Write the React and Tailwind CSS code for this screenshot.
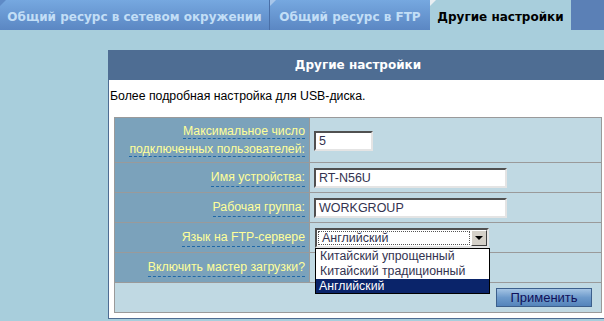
import React from "react";

const Label = ({ children }) => (
  <span className="border-b border-dashed border-[#1f68a8]">{children}</span>
);

const inset =
  "border-2 border-t-[#505050] border-l-[#505050] border-b-[#e4e4e4] border-r-[#e4e4e4] bg-white";

export default function App() {
  return (
    <div
      className="w-[604px] h-[321px] overflow-hidden bg-[#a8cedc] relative"
      style={{ fontFamily: '"Liberation Sans", Arial, sans-serif' }}
    >
      {/* Tabs */}
      <div className="flex h-[30px] bg-gradient-to-b from-[#6e9fd8] to-[#5a82bc]">
        <div className="relative w-[270px] h-full flex items-center justify-center pt-[3px] border-r border-[#4a70a8] bg-gradient-to-b from-[#76a8e0] to-[#5b87c3]">
          <div className="absolute left-0 top-0 w-0 h-0 border-t-[6px] border-t-[#5e8ac6] border-r-[6px] border-r-transparent" />
          <span
            className="text-[#c2def6] font-bold whitespace-nowrap"
            style={{ fontFamily: '"DejaVu Sans", Verdana, sans-serif', fontSize: "12px" }}
          >
            Общий ресурс в сетевом окружении
          </span>
        </div>
        <div className="relative w-[160px] h-full flex items-center justify-center pt-[3px] bg-gradient-to-b from-[#76a8e0] to-[#5b87c3]">
          <div className="absolute left-0 top-0 w-0 h-0 border-t-[6px] border-t-[#a7c6ea] border-r-[6px] border-r-transparent" />
          <span
            className="text-[#c2def6] font-bold whitespace-nowrap"
            style={{ fontFamily: '"DejaVu Sans", Verdana, sans-serif', fontSize: "12px" }}
          >
            Общий ресурс в FTP
          </span>
        </div>
        <div className="relative w-[141px] h-full flex items-center justify-center pt-[3px] bg-[#a8cedc]">
          <div className="absolute left-0 top-0 w-0 h-0 border-t-[6px] border-t-[#e8eef2] border-r-[6px] border-r-transparent" />
          <span
            className="text-black font-bold whitespace-nowrap"
            style={{ fontFamily: '"DejaVu Sans", Verdana, sans-serif', fontSize: "12px" }}
          >
            Другие настройки
          </span>
        </div>
        <div className="flex-1 bg-[#5b80b6]" />
      </div>

      {/* Panel */}
      <div className="ml-[108px] mt-[20px] w-[500px] bg-[#4e6d93] px-[1px] pb-[1px]">
        <div className="h-[30px] flex items-center justify-center text-white font-bold">
          <span style={{ fontFamily: '"DejaVu Sans", Verdana, sans-serif', fontSize: "12px" }}>
            Другие настройки
          </span>
        </div>
        <div className="bg-white px-[5px] pb-[5px]">
          <div className="h-[37px] pt-[9px] -ml-[4px] text-[12.3px] leading-[14px] text-black">
            Более подробная настройка для USB-диска.
          </div>
          <div className="border border-[#9a9a9a] text-[12.3px]">
            {/* Row 1 */}
            <div className="flex h-[45px] border-b border-[#9a9a9a]">
              <div className="w-[195px] shrink-0 bg-[#7ba2bb] border-r border-[#9a9a9a] flex flex-col items-end justify-center pr-[4px] leading-[18px] text-[#ffff99]">
                <div><Label>Максимальное число</Label></div>
                <div><Label>подключенных пользователей:</Label></div>
              </div>
              <div className="flex-1 bg-[#c0d9e3] flex items-center pl-[4px] pt-[1px]">
                <div className={`w-[59px] h-[20px] ${inset} text-[12.5px] leading-[16px] pl-[3px] text-[#333350]`}>5</div>
              </div>
            </div>
            {/* Row 2 */}
            <div className="flex h-[30px] border-b border-[#9a9a9a]">
              <div className="w-[195px] shrink-0 bg-[#7ba2bb] border-r border-[#9a9a9a] flex items-center justify-end pr-[4px] text-[#ffff99]">
                <Label>Имя устройства:</Label>
              </div>
              <div className="flex-1 bg-[#c0d9e3] flex items-center pl-[4px]">
                <div className={`w-[193px] h-[20px] ${inset} text-[12.5px] leading-[16px] pl-[3px] text-[#333350]`}>RT-N56U</div>
              </div>
            </div>
            {/* Row 3 */}
            <div className="flex h-[30px] border-b border-[#9a9a9a]">
              <div className="w-[195px] shrink-0 bg-[#7ba2bb] border-r border-[#9a9a9a] flex items-center justify-end pr-[4px] text-[#ffff99]">
                <Label>Рабочая группа:</Label>
              </div>
              <div className="flex-1 bg-[#c0d9e3] flex items-center pl-[4px]">
                <div className={`w-[193px] h-[20px] ${inset} text-[12.5px] leading-[16px] pl-[3px] text-[#333350]`}>WORKGROUP</div>
              </div>
            </div>
            {/* Row 4 */}
            <div className="flex h-[30px] border-b border-[#9a9a9a]">
              <div className="w-[195px] shrink-0 bg-[#7ba2bb] border-r border-[#9a9a9a] flex items-center justify-end pr-[4px] text-[#ffff99]">
                <Label>Язык на FTP-сервере</Label>
              </div>
              <div className="flex-1 bg-[#c0d9e3] flex items-center pl-[5px] relative">
                <div className={`w-[174px] h-[20px] ${inset} flex`}>
                  <div className="flex-1 m-[1px] border border-dotted border-[#555] text-[12.5px] leading-[12px] pl-[3px] text-[#333350]">
                    Английский
                  </div>
                  <div className="w-[16px] h-[16px] bg-[#d4d0c8] border border-t-white border-l-white border-b-[#404040] border-r-[#404040] flex items-center justify-center">
                    <div className="w-0 h-0 border-l-[4px] border-r-[4px] border-t-[4px] border-l-transparent border-r-transparent border-t-black" />
                  </div>
                </div>
                <div className="absolute left-[5px] top-[25px] w-[175px] border border-black bg-white z-10 text-[12.3px] leading-[15px] text-[#333350]">
                  <div className="pl-[4px] h-[15px]">Китайский упрощенный</div>
                  <div className="pl-[4px] h-[15px]">Китайский традиционный</div>
                  <div className="pl-[3px] h-[14px] bg-[#0a246a] text-white">Английский</div>
                </div>
              </div>
            </div>
            {/* Row 5 */}
            <div className="flex h-[30px] border-b border-[#9a9a9a]">
              <div className="w-[195px] shrink-0 bg-[#7ba2bb] border-r border-[#9a9a9a] flex items-center justify-end pr-[4px] text-[#ffff99]">
                <Label>Включить мастер загрузки?</Label>
              </div>
              <div className="flex-1 bg-[#c0d9e3]" />
            </div>
            {/* Button row */}
            <div className="h-[29px] bg-[#c0d9e3] flex items-center justify-end pr-[9px]">
              <button className="w-[96px] h-[19px] border border-[#3c5f8c] bg-gradient-to-b from-[#a4c4e4] via-[#6d9acb] to-[#5484bb] text-[13px] leading-[15px] text-[#10105a]">
                Применить
              </button>
            </div>
          </div>
        </div>
      </div>
    </div>
  );
}
